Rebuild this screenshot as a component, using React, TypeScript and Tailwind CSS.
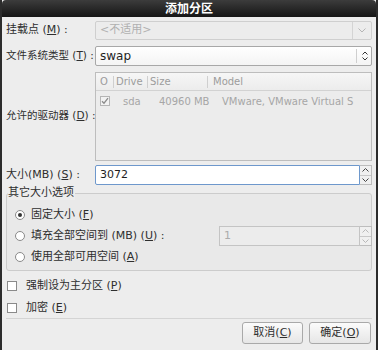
import React from 'react';

const font = { fontFamily: '"DejaVu Sans", "Noto Sans CJK SC", sans-serif' };

const U: React.FC<{ c: string }> = ({ c }) => <span className="underline underline-offset-1">{c}</span>;

const Radio: React.FC<{ checked?: boolean }> = ({ checked }) => (
  <span className="w-[10px] h-[10px] rounded-full border border-[#8a8a8a] bg-white flex items-center justify-center shrink-0">
    {checked && <span className="w-[4px] h-[4px] rounded-full bg-[#333]" />}
  </span>
);

const Check: React.FC<{ checked?: boolean; disabled?: boolean }> = ({ checked, disabled }) => (
  <span
    className={`w-[10px] h-[10px] border flex items-center justify-center shrink-0 ${
      disabled ? 'border-[#b5b5b5] bg-[#f2f2f2]' : 'border-[#8a8a8a] bg-white'
    }`}
  >
    {checked && (
      <svg width="8" height="8" viewBox="0 0 8 8">
        <path d="M1 4.2 L3 6.2 L7 1.2" stroke="#8a8a8a" strokeWidth="1.3" fill="none" />
      </svg>
    )}
  </span>
);

const Spin: React.FC<{ disabled?: boolean }> = ({ disabled }) => {
  const col = disabled ? '#b8b8b8' : '#444';
  return (
    <div className="w-[12px] h-full flex flex-col border border-l-0 border-[#bdbdbd] bg-[#f0f0f0]">
      <div className="flex-1 flex items-center justify-center border-b border-[#c8c8c8]">
        <svg width="7" height="4" viewBox="0 0 7 4">
          <path d="M0.5 3.5 L3.5 0.5 L6.5 3.5" stroke={col} fill="none" />
        </svg>
      </div>
      <div className="flex-1 flex items-center justify-center">
        <svg width="7" height="4" viewBox="0 0 7 4">
          <path d="M0.5 0.5 L3.5 3.5 L6.5 0.5" stroke={col} fill="none" />
        </svg>
      </div>
    </div>
  );
};

const App: React.FC = () => {
  return (
    <div
      className="w-[378px] h-[350px] bg-[#ededed] text-[11px] text-[#2e2e2e] border-l-2 border-r-2 border-[#2c2c2c] flex flex-col overflow-hidden whitespace-nowrap"
      style={font}
    >
      {/* title bar */}
      <div className="h-[17px] shrink-0 bg-gradient-to-b from-[#3c3c3c] to-[#161616] text-white font-bold text-[12px] flex items-center justify-center rounded-t-[4px]">
        添加分区
      </div>

      <div className="flex flex-col pl-[2px] pr-[4px]">
        {/* mount point */}
        <div className="flex items-center mt-[4px] h-[19px]">
          <div className="w-[91px] pl-[2px]">
            挂载点 (<U c="M" />) :
          </div>
          <div className="flex-1 h-full flex border border-[#cfcfcf] bg-[#ececec] rounded-[2px]">
            <div className="flex-1 flex items-center pl-[4px] text-[#b0b0b0]">&lt;不适用&gt;</div>
            <div className="w-[19px] border-l border-[#d4d4d4] flex items-center justify-center">
              <svg width="8" height="5" viewBox="0 0 8 5">
                <path d="M0.5 0.5 L4 4 L7.5 0.5" stroke="#b5b5b5" fill="none" />
              </svg>
            </div>
          </div>
        </div>

        {/* file system type */}
        <div className="flex items-center mt-[6px] h-[20px]">
          <div className="w-[91px] pl-[2px] text-[10.5px]">
            文件系统类型 (<U c="T" />) :
          </div>
          <div className="flex-1 h-full flex border border-[#a8a8a8] bg-gradient-to-b from-white to-[#f4f4f4] rounded-[2px]">
            <div className="flex-1 flex items-center pl-[4px] text-[12px] text-[#1e1e1e]">swap</div>
            <div className="w-[18px] flex items-center justify-center">
              <span className="w-px h-[14px] bg-[#cfcfcf] mr-[5px]" />
              <svg width="6" height="10" viewBox="0 0 6 10">
                <path d="M0.5 3.5 L3 1 L5.5 3.5 M0.5 6.5 L3 9 L5.5 6.5" stroke="#333" fill="none" />
              </svg>
            </div>
          </div>
        </div>

        {/* drives */}
        <div className="flex items-center mt-[6px] h-[89px]">
          <div className="w-[91px] pl-[2px] mt-[-1px] text-[10.5px]">
            允许的驱动器 (<U c="D" />) :
          </div>
          <div className="flex-1 h-full border border-[#bdbdbd] bg-[#ececec] flex flex-col text-[#a6a6a6] text-[10px]">
            <div className="h-[18px] flex items-center border-b border-[#d2d2d2] bg-gradient-to-b from-[#f6f6f6] to-[#ececec] text-[#9c9c9c]">
              <span className="w-[17px] pl-[4px]">O</span>
              <span className="w-px h-[12px] bg-[#cfcfcf]" />
              <span className="w-[33px] pl-[2px]">Drive</span>
              <span className="w-px h-[12px] bg-[#cfcfcf]" />
              <span className="w-[59px] pl-[2px]">Size</span>
              <span className="w-px h-[12px] bg-[#cfcfcf]" />
              <span className="pl-[5px]">Model</span>
            </div>
            <div className="h-[20px] flex items-center">
              <span className="w-[27px] pl-[4px] flex">
                <Check checked disabled />
              </span>
              <span className="w-[36px]">sda</span>
              <span className="w-[63px]">40960 MB</span>
              <span>VMware, VMware Virtual S</span>
            </div>
          </div>
        </div>

        {/* size */}
        <div className="flex items-center mt-[4px] h-[20px]">
          <div className="w-[91px] pl-[2px]">
            大小(MB) (<U c="S" />) :
          </div>
          <div className="flex-1 h-full flex">
            <div className="flex-1 flex items-center pl-[4px] border border-[#6e98cc] bg-white rounded-l-[2px] text-[#1e1e1e]">
              3072
            </div>
            <Spin />
          </div>
        </div>

        {/* other size options */}
        <div className="relative mt-[8px] ml-[2px] h-[78px] border border-[#cccccc] rounded-[3px] bg-[#e9e9e9] flex flex-col pl-[8px]">
          <span className="absolute left-[1px] top-[-8px] bg-[#ededed] pr-[1px] leading-[14px]">其它大小选项</span>
          <div className="flex items-center gap-[6px] mt-[14px] h-[14px]">
            <Radio checked />
            <span>
              固定大小 (<U c="F" />)
            </span>
          </div>
          <div className="flex items-center mt-[4px] h-[20px]">
            <Radio />
            <span className="ml-[6px] flex-1">
              填充全部空间到 (MB) (<U c="U" />) :
            </span>
            <div className="w-[153px] h-full flex mr-[-1px]">
              <div className="flex-1 flex items-center pl-[4px] border border-[#c4c4c4] bg-[#ececec] text-[#ababab]">1</div>
              <Spin disabled />
            </div>
          </div>
          <div className="flex items-center gap-[6px] mt-[4px] h-[14px]">
            <Radio />
            <span>
              使用全部可用空间 (<U c="A" />)
            </span>
          </div>
        </div>

        {/* checkboxes */}
        <div className="flex items-center gap-[9px] mt-[8px] h-[14px] pl-[3px]">
          <Check />
          <span>
            强制设为主分区 (<U c="P" />)
          </span>
        </div>
        <div className="flex items-center gap-[9px] mt-[8px] h-[14px] pl-[3px]">
          <Check />
          <span>
            加密 (<U c="E" />)
          </span>
        </div>

        <div className="mt-[3px] ml-[2px] h-px bg-[#d4d4d4]" />

        {/* buttons */}
        <div className="flex justify-end gap-[6px] mt-[3px] pr-[1px]">
          <button className="w-[61px] h-[22px] border border-[#a9a9a9] rounded-[3px] bg-gradient-to-b from-[#fbfbfb] to-[#e6e6e6] text-[11px] text-[#2e2e2e]">
            取消(<U c="C" />)
          </button>
          <button className="w-[62px] h-[22px] border border-[#a9a9a9] rounded-[3px] bg-gradient-to-b from-[#fbfbfb] to-[#e6e6e6] text-[11px] text-[#2e2e2e]">
            确定(<U c="O" />)
          </button>
        </div>
      </div>
    </div>
  );
};

export default App;
